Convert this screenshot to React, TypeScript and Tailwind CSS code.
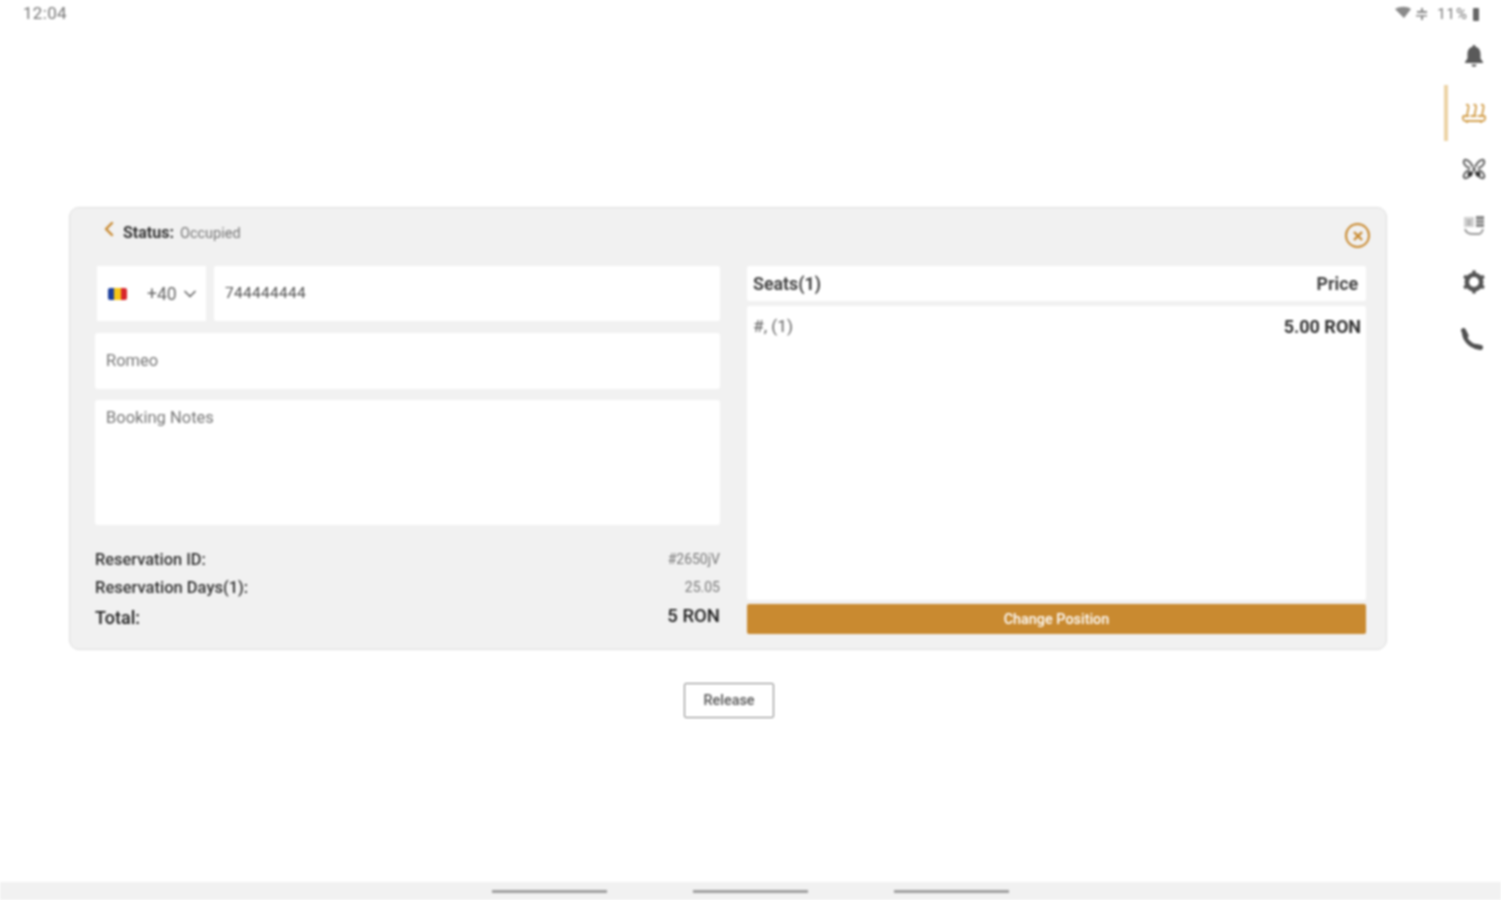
import { ChevronDown, ChevronLeft } from "lucide-react";

const font = { fontFamily: '"Roboto", "Liberation Sans", sans-serif' };

function BellIcon() {
  return (
    <svg width="20" height="24" viewBox="0 0 20 24" fill="#5a5a5a">
      <path d="M10 1c1 0 1.500.7 1.500 1.700C15 3.600 16.500 6.500 16.500 10v4.500l2.500 3.500v1H1v-1l2.500-3.500V10c0-3.500 1.500-6.400 5-7.300C8.500 1.700 9 1 10 1z" />
      <path d="M7.500 20.500h5c0 1.300-1.100 2.300-2.500 2.300s-2.500-1-2.500-2.300z" />
    </svg>
  );
}

function SeatsIcon() {
  return (
    <svg width="26" height="22" viewBox="0 0 26 22" fill="none" stroke="#d3a04e" strokeWidth="1.800">
      <path d="M5 3c2-1 3 1 2.500 3L6 13M12.500 3c2-1 3 1 2.500 3l-1.500 7M20 3c2-1 3 1 2.500 3L21 13" />
      <path d="M2 14h6M9.500 14h6M17 14h7" />
      <path d="M2 14c-.5 3 0 5 3 5h16c3 0 3.500-2 3-5" />
      <path d="M6 19v2M20 19v2" />
    </svg>
  );
}

function ButterflyIcon() {
  return (
    <svg width="26" height="26" viewBox="0 0 26 26" fill="none" stroke="#666" strokeWidth="2">
      <path d="M3 4c4-1 7 3 9 7M23 4c-4-1-7 3-9 7M3 22c4 1 7-3 9-7M23 22c-4 1-7-3-9-7" />
      <path d="M3 4c-1 3 1 7 6 8M23 4c1 3-1 7-6 8M3 22c-1-3 1-7 6-8M23 22c1-3-1-7-6-8" />
      <circle cx="9" cy="18" r="2.500" fill="#333" stroke="none" />
      <circle cx="17" cy="18" r="2.500" fill="#333" stroke="none" />
      <circle cx="13" cy="13" r="1.500" fill="#333" stroke="none" />
    </svg>
  );
}

function TableIcon() {
  return (
    <svg width="24" height="24" viewBox="0 0 24 24" fill="none">
      <path d="M2 3h10v10H2z" fill="#d0d0d0" />
      <path d="M14 2h8v11h-8z" fill="#888" />
      <path d="M14 6h8M14 9.500h8" stroke="#e4e4e4" />
      <path d="M3 15c1 4 4 5 8 5h6c2 0 3-2 4-5" stroke="#999" strokeWidth="2" />
      <path d="M5 7h4M5 10h4" stroke="#a0a0a0" strokeWidth="1.500" />
    </svg>
  );
}

function GearIcon() {
  return (
    <svg width="26" height="26" viewBox="0 0 26 26" fill="none">
      <circle cx="13" cy="13" r="7.200" stroke="#555" strokeWidth="4.600" />
      <path d="M13 1.500v4M13 20.500v4M3 7.200l3.500 2M19.500 16.800l3.500 2M3 18.800l3.500-2M19.500 9.200l3.500-2" stroke="#555" strokeWidth="3.400" />
    </svg>
  );
}

function PhoneIcon() {
  return (
    <svg width="24" height="24" viewBox="0 0 24 24" fill="none" stroke="#505050" strokeLinecap="round" className="-ml-[4px]">
      <path d="M4 5c0 7 5 13 13 15" strokeWidth="4" />
      <path d="M3.500 3.500l2.500 5" strokeWidth="5" />
      <path d="M16 19.500l4.500 1" strokeWidth="5" />
    </svg>
  );
}

function RoFlag() {
  return (
    <span className="flex h-[12px] w-[19px] overflow-hidden rounded-[2px]">
      <span className="flex-1 bg-[#1c3f9c]" />
      <span className="flex-1 bg-[#f5c518]" />
      <span className="flex-1 bg-[#d8262c]" />
    </span>
  );
}

const sideItems = [
  { key: "bell", icon: <BellIcon />, active: false },
  { key: "seats", icon: <SeatsIcon />, active: true },
  { key: "butterfly", icon: <ButterflyIcon />, active: false },
  { key: "table", icon: <TableIcon />, active: false },
  { key: "gear", icon: <GearIcon />, active: false },
  { key: "phone", icon: <PhoneIcon />, active: false },
];

export default function App() {
  return (
    <div style={font} className="flex h-[900px] w-[1501px] flex-col overflow-hidden bg-white text-[#444] blur-[0.8px]">
      {/* status bar */}
      <div className="flex h-[28px] items-center justify-between pl-[23px] pr-[22px] text-[17px] text-[#777]">
        <span className="tracking-[0.3px]">12:04</span>
        <div className="flex items-center gap-[3px] text-[15px]">
          <svg width="37" height="16" viewBox="0 0 37 16" fill="#8a8a8a">
            <path d="M0 3c5-3 12-3 16 0l-7 9zM26 2h2v3h4v2H22V5h4zM21 9h11v1.500h-4V14h-2v-3.500h-5z" />
          </svg>
          <span className="ml-[2px] tracking-[1px]">11%</span>
          <span className="ml-[2px] h-[13px] w-[6px] rounded-[1px] bg-[#666]" />
        </div>
      </div>

      <div className="flex flex-1">
        <main className="flex-1 pl-[69px] pt-[179px]">
          <div className="w-[1318px] rounded-[10px] border border-[#dedede] bg-[#f1f1f1] pb-[15px] pl-[25px] pr-[20px]">
            {/* header */}
            <div className="flex h-[58px] items-center justify-between">
              <div className="-mt-[8px] flex items-center pl-[2px]">
                <ChevronLeft size={24} strokeWidth={2.400} className="-mt-[9px] text-[#c98a30]" />
                <span className="ml-[2px] text-[16px] font-bold text-[#333]">Status:</span>
                <span className="ml-[6px] mt-[2px] text-[14.500px] text-[#777]">Occupied</span>
              </div>
              <div className="-mr-[4px] -mt-[3px] flex h-[25px] w-[25px] items-center justify-center rounded-full border-2 border-[#c98a30]">
                <svg width="10" height="10" viewBox="0 0 10 10" stroke="#c98a30" strokeWidth="2.400">
                  <path d="M1 1l8 8M9 1l-8 8" />
                </svg>
              </div>
            </div>

            <div className="flex gap-[27px]">
              {/* left column */}
              <div className="w-[625px]">
                <div className="flex gap-[8px] pl-[2px]">
                  <div className="flex h-[55px] w-[109px] items-center bg-white pl-[11px] pt-[1px] text-[17.500px] text-[#666]">
                    <RoFlag />
                    <span className="ml-[20px]">+40</span>
                    <ChevronDown size={20} className="ml-[3px] text-[#666]" />
                  </div>
                  <div className="flex h-[55px] flex-1 items-center rounded-[2px] bg-white pl-[11px] pt-[1px] text-[15.500px] tracking-[0.3px] text-[#555]">
                    744444444
                  </div>
                </div>
                <div className="mt-[12px] flex h-[56px] items-center rounded-[3px] bg-white pl-[11px] pt-[1px] text-[16.500px] text-[#777]">
                  Romeo
                </div>
                <div className="mt-[11px] h-[125px] rounded-[3px] bg-white px-[11px] pt-[6px] text-[16.500px] text-[#777]">
                  Booking Notes
                </div>
                <div className="pt-[21px]">
                  <div className="flex h-[28px] items-center justify-between">
                    <span className="text-[16.400px] font-medium text-[#333]">Reservation ID:</span>
                    <span className="-mt-[2px] text-[14px] text-[#777]">#2650jV</span>
                  </div>
                  <div className="flex h-[28px] items-center justify-between">
                    <span className="text-[16.500px] font-medium text-[#333]">Reservation Days(1):</span>
                    <span className="-mt-[2px] text-[14px] text-[#777]">25.05</span>
                  </div>
                  <div className="flex h-[30px] items-center justify-between">
                    <span className="text-[18px] font-medium text-[#222]">Total:</span>
                    <span className="text-[18.500px] font-medium text-[#222]">5 RON</span>
                  </div>
                </div>
              </div>

              {/* right column */}
              <div className="flex w-[619px] flex-col">
                <div className="flex h-[35px] items-center justify-between rounded-[2px] bg-white pl-[6px] pr-[8px] pt-[2px] text-[17.800px] font-bold text-[#444]">
                  <span>Seats(1)</span>
                  <span>Price</span>
                </div>
                <div className="mt-[5px] flex h-[294px] items-start justify-between rounded-[2px] bg-white pl-[6px] pr-[5px] pt-[8px]">
                  <span className="text-[17.300px] text-[#666]">#, (1)</span>
                  <span className="-mt-[1px] text-[18px] font-bold text-[#333]">5.00 RON</span>
                </div>
                <button className="mt-[4px] h-[30px] rounded-[2px] bg-[#c98a30] pt-[1px] text-[14.400px] font-medium text-white">
                  Change Position
                </button>
              </div>
            </div>
          </div>

          <div className="flex w-[1320px] justify-center pt-[33px]">
            <button className="h-[35px] w-[90px] rounded-[2px] border border-[#808080] bg-white text-[14.400px] font-medium text-[#555]">
              Release
            </button>
          </div>
        </main>

        {/* side nav */}
        <nav className="w-[57px]">
          {sideItems.map((item) => (
            <div
              key={item.key}
              className={`flex h-[56.500px] items-center justify-center border-l-[4px] pr-[2px] ${item.active ? "border-[#ecd3a6]" : "border-transparent"}`}
            >
              {item.icon}
            </div>
          ))}
        </nav>
      </div>

      {/* android nav bar */}
      <div className="flex h-[18px] items-start justify-center gap-[86px] bg-[#f1f1f1] pt-[8px]">
        <span className="h-[3px] w-[115px] bg-[#a0a0a0]" />
        <span className="h-[3px] w-[115px] bg-[#a0a0a0]" />
        <span className="h-[3px] w-[115px] bg-[#a0a0a0]" />
      </div>
    </div>
  );
}
